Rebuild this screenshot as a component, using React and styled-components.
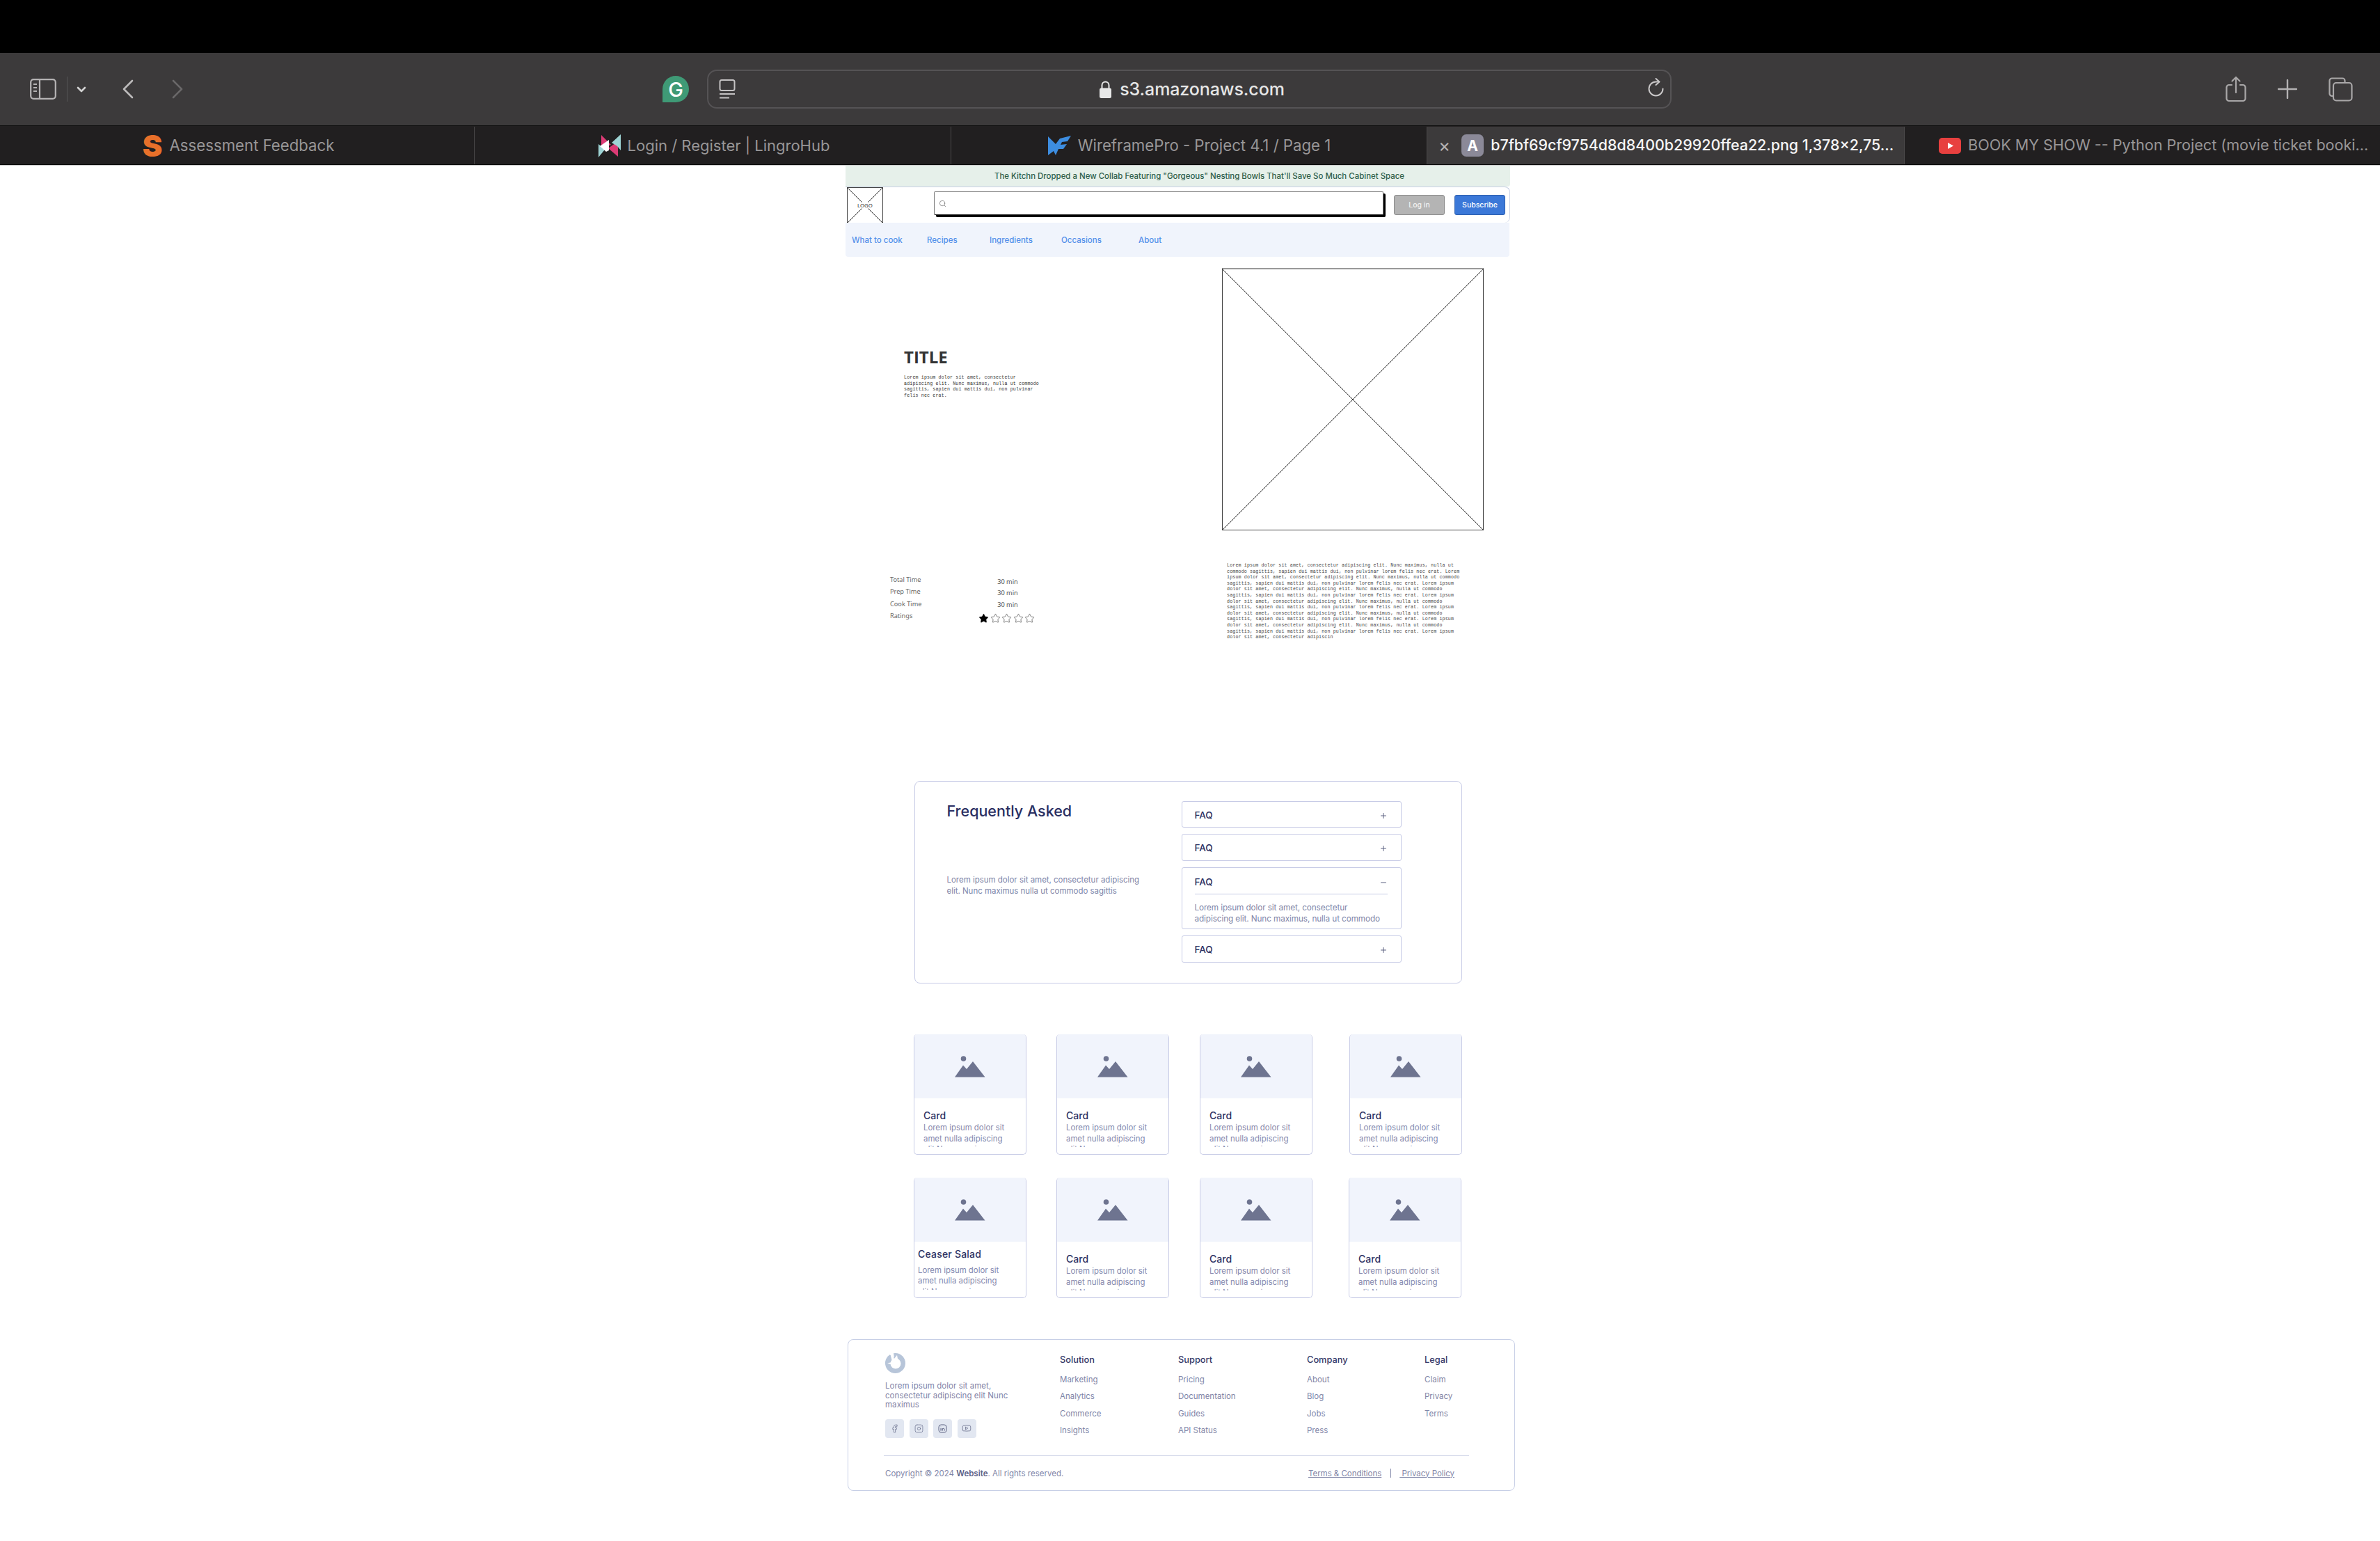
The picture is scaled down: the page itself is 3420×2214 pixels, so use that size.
import React from "react";
import styled, { createGlobalStyle } from "styled-components";
import { Plus, Minus, Star, Facebook, Instagram, Youtube, Search } from "lucide-react";

const Global = createGlobalStyle`
  html, body { margin: 0; padding: 0; background: #fff; }
  body { font-family: Inter, "Liberation Sans", sans-serif; }
  * { box-sizing: border-box; }
`;

const Screen = styled.div`width: 3420px; height: 2214px; overflow: hidden; background: #fff;`;
const Notch = styled.div`height: 76px; background: #000;`;
const Toolbar = styled.div`
  height: 105px; background: #3c3a3b; border-bottom: 1px solid #111;
  display: flex; align-items: center;
`;
const LeftTools = styled.div`
  width: 952px; padding-left: 43px; display: flex; align-items: center;
`;
const Divider = styled.div`width: 1px; height: 36px; background: #555; margin: 0 13px 0 15px;`;
const ToolSpacer = styled.span`width: ${p => p.$w}px;`;
const GrammarlyBadge = styled.div`
  width: 38px; height: 38px; border-radius: 50% 50% 50% 0; background: #3f9a76; color: #fff;
  display: flex; align-items: center; justify-content: center;
  font: 500 29px/1 Inter, sans-serif; margin-right: 26px;
`;
const AddressBar = styled.div`
  width: 1386px; height: 56px; border: 2px solid #555355; border-radius: 14px;
  display: grid; grid-template-columns: 1fr auto 1fr; align-items: center; padding: 0 7px 0 15px;
`;
const UrlBlock = styled.div`display: flex; align-items: center; gap: 12px;`;
const UrlText = styled.span`font: 500 25px/1 Inter, sans-serif; color: #e6e6e6; letter-spacing: -0.1px;`;
const ReloadSlot = styled.div`justify-self: end;`;
const RightTools = styled.div`
  margin-left: auto; padding-right: 39px; display: flex; align-items: center; gap: 45px;
`;
const TabRow = styled.div`
  height: 56px; display: grid; grid-template-columns: 682px 685px 684px 686px 683px;
  background: #211f20; border-bottom: 1px solid #0a0a0a; margin-bottom: 1px;
  box-shadow: 0 1px 0 #c9c9c9;
`;
const Tab = styled.div`
  display: flex; align-items: center; gap: 10px;
  justify-content: ${p => (p.$start ? "flex-start" : "center")};
  padding-left: ${p => p.$pad || 0}px;
  background: ${p => (p.$active ? "#3c3a3b" : "transparent")};
  border-right: ${p => (p.$last ? "none" : "1px solid #4c4a4b")};
  color: ${p => (p.$active ? "#f5f5f5" : "#989697")};
  font: ${p => (p.$active ? 500 : 400)} ${p => p.$size || 22.2}px/1 Inter, sans-serif;
  white-space: nowrap; overflow: hidden; margin-top: 1px;
`;
const SLogo = styled.span`
  font: 900 43px/32px Inter, sans-serif; color: #e8702a; width: 29px; text-align: center;
`;
const CloseMark = styled.span`font: 400 26px/1 Inter, sans-serif; color: #b5b3b4; margin-right: 6px;`;
const LetterTile = styled.span`
  width: 32px; height: 32px; border-radius: 7px; background: #8b8998; color: #fff;
  display: flex; align-items: center; justify-content: center; font: 700 21px/1 Inter, sans-serif;
`;

/* page */
const Sheet = styled.div`width: 962px; margin-left: 1215px;`;
const Banner = styled.div`
  width: 955px; height: 30px; background: #e6f0ea; color: #2f5f4b;
  font: 500 11.45px/30px Inter, sans-serif; text-align: center;
  border-radius: 0 0 4px 0; padding-left: 62px;
`;
const Header = styled.div`
  width: 955px; height: 52px; border: 1px solid #c7d0e4; border-bottom: none; border-left: none;
  border-radius: 0 8px 8px 0; display: flex; align-items: flex-start; padding-left: 2px;
`;
const LogoBox = styled.div`
  position: relative; width: 52px; height: 51px; flex: none;
  border: 1px solid #444; border-bottom: none;
`;
const CrossLines = styled.svg`display: block; width: 100%; height: 100%;`;
const LogoLabel = styled.span`
  position: absolute; left: 50%; top: 50%; transform: translate(-50%, -50%);
  background: #fff; padding: 0 1px; font: 400 7.8px/9px "Noto Sans", sans-serif; color: #333;
`;
const SearchBox = styled.div`
  width: 646px; height: 34px; margin: 6px 0 0 73px; background: #fff; border: 1px solid #777; border-bottom-color: #111;
  border-radius: 2px; box-shadow: 3px 3px 0 #000; display: flex; align-items: center; padding-left: 6px; color: #666;
`;
const HeaderButton = styled.div`
  width: 73px; height: 29px; margin: 11px 0 0 ${p => p.$gap}px; border-radius: 3px;
  background: ${p => p.$bg}; border: 1px solid ${p => p.$edge}; color: ${p => p.$fg};
  font: 500 10.5px/27px Inter, sans-serif; text-align: center;
`;
const Nav = styled.div`
  width: 954px; height: 49px; background: #f0f4fc; border-radius: 0 0 4px 4px;
  display: grid; grid-template-columns: 108px 90px 103px 111px auto; align-items: center;
  padding: 2px 0 0 9px; color: #5490ea; font: 500 11.5px/1 Inter, sans-serif;
`;
const Hero = styled.div`display: flex; margin-top: 16px; height: 377px;`;
const HeroCopy = styled.div`padding: 115px 0 0 84px; width: 541px;`;
const Title = styled.h1`
  margin: 0; font: 700 24px/26px "Open Sans", sans-serif; color: #333;
`;
const Scribble = styled.p`
  margin: ${p => p.$top || 0}px 0 0; width: ${p => p.$w}px;
  font: 400 6.6px/${p => p.$lh}px "Liberation Mono", monospace;
  color: ${p => p.$ink}; letter-spacing: 0.17px;
`;
const HeroImage = styled.div`width: 376px; height: 377px; border: 1px solid #444; border-top: 2px solid #999;`;
const Details = styled.div`display: grid; grid-template-columns: 548px 1fr; margin-top: 47px;`;
const Meta = styled.div`display: flex; padding: 15px 0 0 64px;`;
const MetaLabels = styled.div`
  width: 127px; font: 400 9.2px/17.3px "Noto Sans", sans-serif; color: #666;
`;
const MetaValues = styled.div`
  width: 84px; padding-top: 4px; text-align: center; font: 400 9.2px/16.4px "Noto Sans", sans-serif; color: #555;
`;
const Stars = styled.div`display: flex; gap: 1.6px; margin-top: 4px;`;

const FaqPanel = styled.section`
  margin: 201px 0 0 98.5px; width: 787px; height: 291px; border: 1px solid #c7cbe6; border-radius: 8px;
  padding: 28px 0 0 46px; display: grid; grid-template-columns: 337px 316px;
`;
const FaqHeading = styled.h2`
  margin: 0; font: 500 21.5px/28px Inter, sans-serif; color: #2a2f62;
`;
const FaqIntro = styled.p`
  margin: 77px 0 0; font: 400 11.5px/16px Inter, sans-serif; color: #8186a8; letter-spacing: -0.02px;
`;
const FaqList = styled.div`display: flex; flex-direction: column; gap: 9px;`;
const FaqItem = styled.div`
  height: ${p => (p.$open ? 89.5 : 38.5)}px; border: 1px solid #c7cbe6; border-radius: 3px; padding: 0 19px 0 18px;
`;
const FaqRow = styled.div`
  height: 38px; display: flex; align-items: center; justify-content: space-between;
  padding-top: ${p => (p.$open ? 5 : 2)}px;
  font: 500 13.5px/1 Inter, sans-serif; color: #2a2f62;
  ${p => p.$open && "border-bottom: 1px solid #c7cbe6;"}
`;
const FaqAnswer = styled.p`
  margin: 11px 0 0; font: 400 11.75px/16px Inter, sans-serif; color: #8186a8; letter-spacing: -0.1px; white-space: nowrap;
`;
const CardGrid = styled.div`
  margin: 73px 0 0 98px; display: grid; grid-template-columns: 205px 206px 215px 162px; row-gap: 33px;
`;
const Card = styled.article`
  width: 162px; height: 173px; border: 1px solid #c7cbe6; border-top: none; border-radius: 5px;
  overflow: hidden; margin-left: ${p => p.$nudge || 0}px;
`;
const CardImage = styled.div`
  height: 92px; background: #f1f4fc; display: flex; justify-content: center; padding: 31px 0 0; margin: 0 -1px;
`;
const CardBody = styled.div`padding: ${p => (p.$tight ? "9px 0 0 5px" : "16px 0 0 13px")};`;
const CardTitle = styled.h3`
  margin: 0; font: 500 14px/18px Inter, sans-serif; color: #2d3263; letter-spacing: ${p => (p.$tight ? 0.2 : 0.05)}px;
`;
const CardText = styled.p`
  margin: ${p => (p.$tight ? 7 : 1.5)}px 0 0; height: 35px; overflow: hidden; width: 128px;
  font: 400 11.4px/15.6px Inter, sans-serif; color: #8589ae;
`;

const Footer = styled.footer`
  margin: 59px 0 0 3px; width: 959px; height: 218px; border: 1px solid #c7cfe6; border-radius: 8px;
  padding: 19px 0 0 51px;
`;
const FooterInner = styled.div`width: 841px;`;
const FooterTop = styled.div`
  display: grid; grid-template-columns: 251px 170px 185px 169px 1fr; height: 148px;
  padding-left: 2px; border-bottom: 1px solid #cdd3e6;
`;
const FooterLogo = styled.svg`display: block; width: 29px; height: 29px;`;
const BrandText = styled.p`
  margin: 12px 0 0; width: 190px; font: 400 11.5px/13.8px Inter, sans-serif; color: #7f84a8; letter-spacing: 0.05px;
`;
const Socials = styled.div`display: flex; gap: 7.5px; margin-top: 12.6px;`;
const SocialTile = styled.div`
  width: 27px; height: 27px; border-radius: 4px; background: #e2e7f1; color: #5a6080;
  display: flex; align-items: center; justify-content: center;
`;
const LinkColumn = styled.div`padding-top: 2px;`;
const ColumnHead = styled.h4`margin: 0 0 8px; font: 500 12.8px/16px Inter, sans-serif; color: #343968;`;
const ColumnLink = styled.div`font: 400 11.5px/24.4px Inter, sans-serif; color: #8186a8;`;
const FooterBottom = styled.div`
  display: flex; align-items: center; padding: 17px 21px 0 2px; font: 400 11.5px/16px Inter, sans-serif; color: #8186a8;
`;
const Copy = styled.span`flex: 1; b { font-weight: 600; color: #5e6488; }`;
const LegalLink = styled.span`text-decoration: underline; letter-spacing: -0.04px;`;
const LegalBar = styled.span`width: 1px; height: 13px; background: #8186a8; margin: 0 12px 0 13px;`;

const Cross = () => (
  <CrossLines viewBox="0 0 100 100" preserveAspectRatio="none">
    <path d="M0 0L100 100M100 0L0 100" stroke="#333" strokeWidth="1" vectorEffect="non-scaling-stroke" fill="none" />
  </CrossLines>
);

const Mountain = () => (
  <svg width="44" height="31" viewBox="0 0 44 31" style={{ display: "block" }}>
    <circle cx="12.5" cy="4" r="3.8" fill="#6e7490" />
    <path d="M0 30.5L12 13.5L17 19L26 8L43.5 30.5Z" fill="#6e7490" />
  </svg>
);

const LinkedinMark = () => (
  <svg width="13" height="13" viewBox="0 0 13 13" fill="none" stroke="currentColor" strokeWidth="1">
    <rect x="1" y="1" width="11" height="11" rx="3.2" />
    <path d="M4 6v3.6M4 3.8v.4M6.2 9.6V6M6.2 7.4c.5-1.5 2.9-1.5 2.9.3v1.9" />
  </svg>
);

const SidebarIcon = () => (
  <svg width="38" height="30" viewBox="0 0 38 30" fill="none" stroke="#b6b4b5" strokeWidth="2.2">
    <rect x="1.2" y="1.2" width="35.6" height="27.6" rx="4" />
    <path d="M14 1.5v27" />
    <path d="M5 8h5M5 13h5M5 18h5" strokeWidth="2" />
  </svg>
);
const Chevron = ({ d, c, w, h }) => (
  <svg width={w} height={h} viewBox={`0 0 ${w} ${h}`} fill="none" stroke={c} strokeWidth="2.6" strokeLinecap="round" strokeLinejoin="round">
    <path d={d} />
  </svg>
);
const ReaderIcon = () => (
  <svg width="24" height="28" viewBox="0 0 24 28" fill="none" stroke="#c4c2c3" strokeWidth="2">
    <rect x="1.5" y="1" width="21" height="15" rx="2.5" />
    <path d="M1 21h22M1 26.5h14" />
  </svg>
);
const LockIcon = () => (
  <svg width="17" height="25" viewBox="0 0 17 25">
    <path d="M3.5 11V6.5a5 5 0 0 1 10 0V11" fill="none" stroke="#e8e8e8" strokeWidth="2" />
    <rect x="0" y="10.5" width="17" height="14.5" rx="2.5" fill="#e8e8e8" />
  </svg>
);
const ReloadIcon = () => (
  <svg width="26" height="28" viewBox="0 0 26 28" fill="none" stroke="#c9c7c8" strokeWidth="2" strokeLinecap="round" strokeLinejoin="round">
    <path d="M22.5 15.5a10 10 0 1 1-10-10h4" />
    <path d="M12.5 1l5 4.5-5 4.5" />
  </svg>
);
const ShareIcon = () => (
  <svg width="30" height="38" viewBox="0 0 30 38" fill="none" stroke="#a9a7a8" strokeWidth="2.2" strokeLinecap="round" strokeLinejoin="round">
    <path d="M9 13H5a3.5 3.5 0 0 0-3.5 3.5v16A3.5 3.5 0 0 0 5 36h20a3.5 3.5 0 0 0 3.5-3.5v-16A3.5 3.5 0 0 0 25 13h-4" />
    <path d="M15 24V2M9.5 7.5L15 2l5.5 5.5" />
  </svg>
);
const PlusIcon = () => (
  <svg width="28" height="28" viewBox="0 0 28 28" stroke="#b4b2b3" strokeWidth="2.4" strokeLinecap="round">
    <path d="M14 1v26M1 14h26" />
  </svg>
);
const TabsIcon = () => (
  <svg width="35" height="35" viewBox="0 0 35 35" fill="none" stroke="#a9a7a8" strokeWidth="2.2">
    <path d="M6.5 27H5a3.5 3.5 0 0 1-3.5-3.5V5A3.5 3.5 0 0 1 5 1.5h15A3.5 3.5 0 0 1 23.5 5v3" />
    <rect x="7" y="8" width="26.5" height="25.5" rx="4" />
  </svg>
);
const LingroLogo = () => (
  <svg width="32" height="33" viewBox="0 0 32 33">
    <path d="M4 1l14 14-14 6z" fill="#dc3b75" />
    <path d="M0 33V14l9 8z" fill="#9ed4d4" />
    <path d="M28 32L14 20l14-10z" fill="#dc3b75" />
    <path d="M2 17L15 8v15l-4 2z" fill="#fff" />
    <path d="M32 0v23l-5-6-8-5z" fill="#9ed4d4" />
  </svg>
);
const WireLogo = () => (
  <svg width="33" height="28" viewBox="0 0 33 28" fill="#3d8de0">
    <path d="M0 1l11 11L17 4 33 0 28 8 20 9 18 13 27 12 22 19 15 19 11 28 8 22 0 28z" />
  </svg>
);
const YtLogo = () => (
  <svg width="32" height="23" viewBox="0 0 32 23">
    <rect width="32" height="23" rx="5" fill="#e8403f" />
    <path d="M13 7l8 4.5-8 4.5z" fill="#fff" />
  </svg>
);
const DonutLogo = () => (
  <FooterLogo viewBox="0 0 29 29">
    <circle cx="14.5" cy="14.5" r="14.5" fill="#b7c5d9" />
    <circle cx="15" cy="15" r="7.5" fill="#fff" />
    <path d="M7 0L13 8L17 3L18 8L10 13L3 14.5L9 16.5L10 12Z" fill="#fff" />
    <path d="M4 0H12L13 7Z" fill="#fff" />
  </FooterLogo>
);

const HERO_TEXT = "Lorem ipsum dolor sit amet, consectetur adipiscing elit. Nunc maximus, nulla ut commodo sagittis, sapien dui mattis dui, non pulvinar felis nec erat.";
const LOREM = "Lorem ipsum dolor sit amet, consectetur adipiscing elit. Nunc maximus, nulla ut commodo sagittis, sapien dui mattis dui, non pulvinar lorem felis nec erat. ";

const cards = [
  { title: "Card" }, { title: "Card" }, { title: "Card" }, { title: "Card" },
  { title: "Ceaser Salad", tight: true }, { title: "Card" }, { title: "Card" }, { title: "Card", nudge: -1 },
];

const columns = [
  ["Solution", ["Marketing", "Analytics", "Commerce", "Insights"]],
  ["Support", ["Pricing", "Documentation", "Guides", "API Status"]],
  ["Company", ["About", "Blog", "Jobs", "Press"]],
  ["Legal", ["Claim", "Privacy", "Terms"]],
];

export default function App() {
  return (
    <Screen>
      <Global />
      <Notch />
      <Toolbar>
        <LeftTools>
          <SidebarIcon />
          <Divider />
          <Chevron w={14} h={9} c="#d0d0d0" d="M2 2l5 5 5-5" />
          <ToolSpacer $w={51} />
          <Chevron w={17} h={28} c="#bdbbbc" d="M15 2L3 14l12 12" />
          <ToolSpacer $w={55} />
          <Chevron w={17} h={28} c="#6a6869" d="M2 2l12 12L2 26" />
        </LeftTools>
        <GrammarlyBadge>G</GrammarlyBadge>
        <AddressBar>
          <ReaderIcon />
          <UrlBlock><LockIcon /><UrlText>s3.amazonaws.com</UrlText></UrlBlock>
          <ReloadSlot><ReloadIcon /></ReloadSlot>
        </AddressBar>
        <RightTools>
          <ShareIcon />
          <PlusIcon />
          <TabsIcon />
        </RightTools>
      </Toolbar>
      <TabRow>
        <Tab $pad={4}><SLogo>S</SLogo>Assessment Feedback</Tab>
        <Tab $pad={4} $size={22}><LingroLogo />Login / Register | LingroHub</Tab>
        <Tab $pad={1}><WireLogo />WireframePro - Project 4.1 / Page 1</Tab>
        <Tab $active $start $pad={16} $size={21.4}>
          <CloseMark>×</CloseMark>
          <LetterTile>A</LetterTile>
          b7fbf69cf9754d8d8400b29920ffea22.png 1,378×2,75...
        </Tab>
        <Tab $start $pad={49} $last $size={21.6}><YtLogo />BOOK MY SHOW -- Python Project (movie ticket booki...</Tab>
      </TabRow>

      <Sheet>
        <Banner>The Kitchn Dropped a New Collab Featuring "Gorgeous" Nesting Bowls That'll Save So Much Cabinet Space</Banner>
        <Header>
          <LogoBox><Cross /><LogoLabel>LOGO</LogoLabel></LogoBox>
          <SearchBox><Search size={11} strokeWidth={1.5} /></SearchBox>
          <HeaderButton $gap={15} $bg="#b4b4b4" $edge="#8c8c8c" $fg="#f2f2f2">Log in</HeaderButton>
          <HeaderButton $gap={14} $bg="#3b78d8" $edge="#2d5fae" $fg="#ffffff">Subscribe</HeaderButton>
        </Header>
        <Nav>
          <span>What to cook</span><span>Recipes</span><span>Ingredients</span><span>Occasions</span><span>About</span>
        </Nav>
        <Hero>
          <HeroCopy>
            <Title>TITLE</Title>
            <Scribble $w={200} $lh={8.6} $top={13} $ink="#333">{HERO_TEXT}</Scribble>
          </HeroCopy>
          <HeroImage><Cross /></HeroImage>
        </Hero>
        <Details>
          <Meta>
            <MetaLabels>
              <div>Total Time</div><div>Prep Time</div><div>Cook Time</div><div>Ratings</div>
            </MetaLabels>
            <MetaValues>
              <div>30 min</div><div>30 min</div><div>30 min</div>
              <Stars>
                <Star size={15} fill="#000" color="#000" strokeWidth={1} />
                {[0, 1, 2, 3].map(i => <Star key={i} size={15} color="#333" strokeWidth={1} />)}
              </Stars>
            </MetaValues>
          </Meta>
          <Scribble $w={349} $lh={8.6} $ink="#444">{LOREM.repeat(8).slice(0, 985)}</Scribble>
        </Details>

        <FaqPanel>
          <div>
            <FaqHeading>Frequently Asked</FaqHeading>
            <FaqIntro>Lorem ipsum dolor sit amet, consectetur adipiscing<br />elit. Nunc maximus nulla ut commodo sagittis</FaqIntro>
          </div>
          <FaqList>
            <FaqItem><FaqRow>FAQ<Plus size={12} color="#5a6080" /></FaqRow></FaqItem>
            <FaqItem><FaqRow>FAQ<Plus size={12} color="#5a6080" /></FaqRow></FaqItem>
            <FaqItem $open>
              <FaqRow $open>FAQ<Minus size={12} color="#5a6080" /></FaqRow>
              <FaqAnswer>Lorem ipsum dolor sit amet, consectetur<br />adipiscing elit. Nunc maximus, nulla ut commodo</FaqAnswer>
            </FaqItem>
            <FaqItem><FaqRow>FAQ<Plus size={12} color="#5a6080" /></FaqRow></FaqItem>
          </FaqList>
        </FaqPanel>

        <CardGrid>
          {cards.map((c, i) => (
            <Card key={i} $nudge={c.nudge}>
              <CardImage><Mountain /></CardImage>
              <CardBody $tight={c.tight}>
                <CardTitle $tight={c.tight}>{c.title}</CardTitle>
                <CardText $tight={c.tight}>Lorem ipsum dolor sit amet nulla adipiscing elit Nunc maximus</CardText>
              </CardBody>
            </Card>
          ))}
        </CardGrid>

        <Footer>
          <FooterInner>
            <FooterTop>
              <div>
                <DonutLogo />
                <BrandText>Lorem ipsum dolor sit amet, consectetur adipiscing elit Nunc maximus</BrandText>
                <Socials>
                  <SocialTile><Facebook size={13} strokeWidth={1.2} /></SocialTile>
                  <SocialTile><Instagram size={13} strokeWidth={1.2} /></SocialTile>
                  <SocialTile><LinkedinMark /></SocialTile>
                  <SocialTile><Youtube size={14} strokeWidth={1.2} /></SocialTile>
                </Socials>
              </div>
              {columns.map(([head, links]) => (
                <LinkColumn key={head}>
                  <ColumnHead>{head}</ColumnHead>
                  {links.map(l => <ColumnLink key={l}>{l}</ColumnLink>)}
                </LinkColumn>
              ))}
            </FooterTop>
            <FooterBottom>
              <Copy>Copyright © 2024 <b>Website</b>. All rights reserved.</Copy>
              <LegalLink>Terms &amp; Conditions</LegalLink>
              <LegalBar />
              <LegalLink>{"\u00A0Privacy Policy"}</LegalLink>
            </FooterBottom>
          </FooterInner>
        </Footer>
      </Sheet>
    </Screen>
  );
}
